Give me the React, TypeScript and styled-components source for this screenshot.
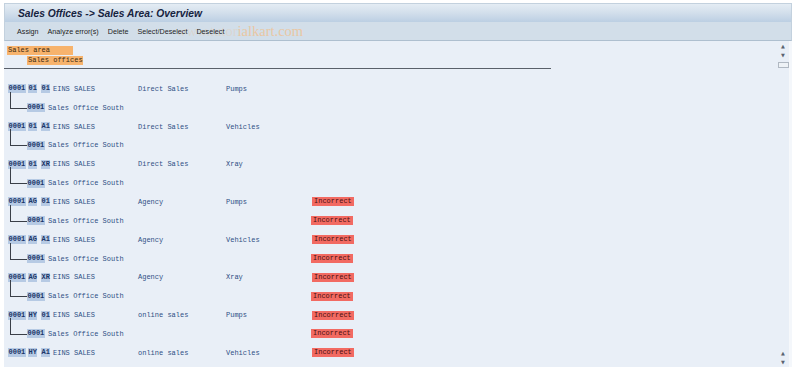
import React from "react";
import styled, { createGlobalStyle } from "styled-components";

const GlobalStyle = createGlobalStyle`
  html, body {
    margin: 0;
    padding: 0;
    background: #ffffff;
  }
  body {
    font-family: "Liberation Sans", Arial, sans-serif;
  }
`;

type Row = {
  vkorg: string;
  vtweg: string;
  spart: string;
  channel: string;
  division: string;
  wrongParent: boolean;
  wrongChild: boolean;
  child: boolean;
};

const rows: Row[] = [
  { vkorg: "0001", vtweg: "01", spart: "01", channel: "Direct Sales", division: "Pumps", wrongParent: false, wrongChild: false, child: true },
  { vkorg: "0001", vtweg: "01", spart: "A1", channel: "Direct Sales", division: "Vehicles", wrongParent: false, wrongChild: false, child: true },
  { vkorg: "0001", vtweg: "01", spart: "XR", channel: "Direct Sales", division: "Xray", wrongParent: false, wrongChild: false, child: true },
  { vkorg: "0001", vtweg: "AG", spart: "01", channel: "Agency", division: "Pumps", wrongParent: true, wrongChild: true, child: true },
  { vkorg: "0001", vtweg: "AG", spart: "A1", channel: "Agency", division: "Vehicles", wrongParent: true, wrongChild: true, child: true },
  { vkorg: "0001", vtweg: "AG", spart: "XR", channel: "Agency", division: "Xray", wrongParent: true, wrongChild: true, child: true },
  { vkorg: "0001", vtweg: "HY", spart: "01", channel: "online sales", division: "Pumps", wrongParent: true, wrongChild: true, child: true },
  { vkorg: "0001", vtweg: "HY", spart: "A1", channel: "online sales", division: "Vehicles", wrongParent: true, wrongChild: false, child: false },
];

const toolbarItems = ["Assign", "Analyze error(s)", "Delete", "Select/Deselect", "Deselect"];

export default function App() {
  return (
    <>
      <GlobalStyle />
      <Frame>
        <TitleBar>
          <Title>Sales Offices -&gt; Sales Area: Overview</Title>
        </TitleBar>
        <Toolbar>
          {toolbarItems.map((t) => (
            <ToolButton key={t}>{t}</ToolButton>
          ))}
          {/* watermark sits over the toolbar in the screenshot */}
          <Watermark>
            <span className="faint">www.tutor</span>ialkart.com
          </Watermark>
        </Toolbar>
        <Body>
          <Content>
            <Legend>
              <LegendLine $indent={0}>
                <Orange $w={66}>Sales area</Orange>
              </LegendLine>
              <LegendLine $indent={20}>
                <Orange $w={56}>Sales offices</Orange>
              </LegendLine>
            </Legend>
            <Rule />
            <List>
              {rows.map((r, i) => (
                <React.Fragment key={i}>
                  <DataRow>
                    <Cell $w={20}>
                      <Key>{r.vkorg}</Key>
                    </Cell>
                    <Cell $w={13}>
                      <Key>{r.vtweg}</Key>
                    </Cell>
                    <Cell $w={12}>
                      <Key>{r.spart}</Key>
                    </Cell>
                    <Cell $w={85}>
                      <Text>EINS SALES</Text>
                    </Cell>
                    <Cell $w={88}>
                      <Text>{r.channel}</Text>
                    </Cell>
                    <Cell $w={86}>
                      <Text>{r.division}</Text>
                    </Cell>
                    {r.wrongParent && <Bad>Incorrect</Bad>}
                  </DataRow>
                  {r.child && (
                    <DataRow>
                      <Connector />
                      <Cell $w={21}>
                        <Key>0001</Key>
                      </Cell>
                      <Cell $w={263}>
                        <Text>Sales Office South</Text>
                      </Cell>
                      {r.wrongChild && <Bad>Incorrect</Bad>}
                    </DataRow>
                  )}
                </React.Fragment>
              ))}
            </List>
          </Content>
          <ScrollBar>
            <ScrollGroup>
              <Arrow>▲</Arrow>
              <Arrow>▼</Arrow>
              <Thumb />
            </ScrollGroup>
            <ScrollGroup>
              <Arrow>▲</Arrow>
              <Arrow>▼</Arrow>
            </ScrollGroup>
          </ScrollBar>
        </Body>
      </Frame>
    </>
  );
}

const Frame = styled.div`
  margin: 3px 8px 0 4px;
  width: 788px;
  display: flex;
  flex-direction: column;
`;

const TitleBar = styled.div`
  height: 19px;
  display: flex;
  align-items: center;
  padding-left: 13px;
  background: linear-gradient(#e4ecf4 0%, #d4e0ec 45%, #bccfe3 100%);
  border: 1px solid #c3d1de;
  border-bottom: none;
  box-sizing: border-box;
`;

const Title = styled.div`
  font-family: "Liberation Sans", Arial, sans-serif;
  font-weight: bold;
  font-style: italic;
  font-size: 10.3px;
  color: #16233f;
`;

const Toolbar = styled.div`
  position: relative;
  height: 19px;
  display: flex;
  align-items: center;
  gap: 9px;
  padding-left: 12px;
  background: #d2dee9;
  border-left: 1px solid #c3d1de;
  border-right: 1px solid #c3d1de;
  border-bottom: 1px solid #aebfcf;
  box-sizing: border-box;
  overflow: hidden;
`;

const ToolButton = styled.span`
  position: relative;
  z-index: 1;
  font-family: "Liberation Sans", Arial, sans-serif;
  font-size: 7.2px;
  color: #1e1e1e;
  white-space: nowrap;
`;

const Watermark = styled.div`
  position: absolute;
  left: 171px;
  top: 1px;
  font-family: "Liberation Serif", "Times New Roman", serif;
  font-size: 14.5px;
  color: #e9c7a4;
  white-space: nowrap;
  .faint {
    color: rgba(233, 199, 164, 0.35);
  }
`;

const Body = styled.div`
  height: 326px;
  display: flex;
  background: #e9eff7;
  border-right: 2px solid #f4f7fb;
`;

const Content = styled.div`
  flex: 1;
  padding: 4px 0 0 3px;
  overflow: hidden;
  font-family: "Liberation Mono", "Courier New", monospace;
  font-size: 7px;
`;

const Legend = styled.div`
  display: flex;
  flex-direction: column;
`;

const LegendLine = styled.div<{ $indent: number }>`
  height: 10px;
  display: flex;
  align-items: center;
  padding-left: ${(p) => p.$indent}px;
`;

const Orange = styled.span<{ $w: number }>`
  width: ${(p) => p.$w}px;
  height: 9px;
  line-height: 9px;
  padding-left: 1px;
  box-sizing: border-box;
  background: #f7b36d;
  color: #3a2a10;
  white-space: pre;
`;

const Rule = styled.div`
  width: 547px;
  margin-left: -3px;
  margin-top: 3px;
  border-top: 1px solid #59606a;
`;

const List = styled.div`
  margin-top: 10.4px;
  display: flex;
  flex-direction: column;
`;

const DataRow = styled.div`
  height: 18.86px;
  display: flex;
  align-items: center;
  padding-left: 1px;
`;

const Cell = styled.div<{ $w: number }>`
  width: ${(p) => p.$w}px;
  flex: none;
  display: flex;
  align-items: center;
`;

const Key = styled.span`
  background: #b6cae4;
  color: #1a3568;
  font-weight: bold;
  height: 9px;
  line-height: 9px;
  padding: 0 0.5px;
  white-space: pre;
`;

const Text = styled.span`
  color: #2f4f85;
  white-space: pre;
`;

const Bad = styled.span`
  width: 42px;
  height: 9px;
  line-height: 9px;
  padding-left: 2px;
  box-sizing: border-box;
  background: #f26a62;
  color: #4a1010;
  white-space: pre;
`;

const Connector = styled.div`
  flex: none;
  align-self: flex-start;
  width: 16px;
  height: 16px;
  margin: -6.5px 0 0 2px;
  border-left: 1px solid #3a3f48;
  border-bottom: 1px solid #3a3f48;
`;

const ScrollBar = styled.div`
  width: 12px;
  display: flex;
  flex-direction: column;
  justify-content: space-between;
  align-items: center;
  padding: 2px 0 1px;
  border-right: 1px solid #f6f8fb;
`;

const ScrollGroup = styled.div`
  display: flex;
  flex-direction: column;
  align-items: center;
  gap: 2px;
`;

const Arrow = styled.span`
  font-family: "DejaVu Sans", sans-serif;
  font-size: 5px;
  line-height: 7px;
  color: #5a6270;
`;

const Thumb = styled.div`
  width: 9px;
  height: 4px;
  margin-top: 1px;
  border: 1px solid #b0b8c2;
  background: #eef2f6;
`;
